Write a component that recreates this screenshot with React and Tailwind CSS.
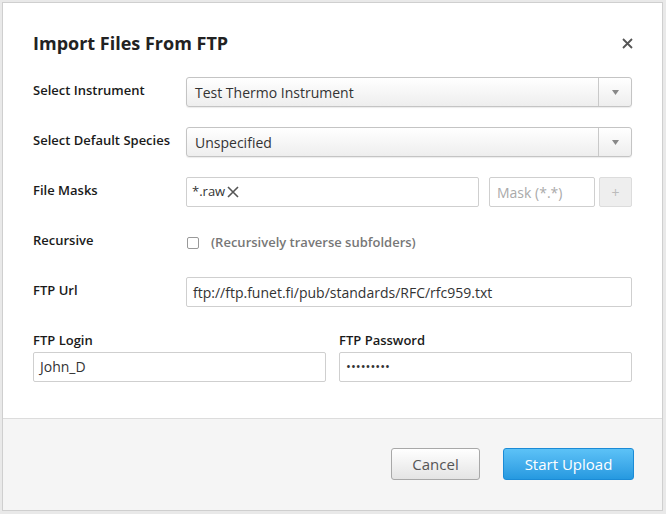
import React from "react";

const font = { fontFamily: '"Open Sans", "Noto Sans", sans-serif' };

function Caret() {
  return (
    <svg width="7" height="5" viewBox="0 0 7 5">
      <path d="M0 0 L7 0 L3.5 5 Z" fill="#888" />
    </svg>
  );
}

function Select({ value }) {
  return (
    <div className="flex h-[30px] flex-1 rounded-[3px] border border-[#c4c4c4] bg-gradient-to-b from-white to-[#eeeeee] shadow-[0_1px_1px_rgba(0,0,0,0.08)]">
      <div className="flex flex-1 items-center pl-[8px] text-[14px] text-[#333]">{value}</div>
      <div className="flex w-[33px] items-center justify-center border-l border-[#c9c9c9]">
        <Caret />
      </div>
    </div>
  );
}

function Label({ children }) {
  return <div className="w-[153px] shrink-0 pt-[4px] text-[13px] font-semibold text-[#1a1a1a]">{children}</div>;
}

export default function App() {
  return (
    <div className="h-[514px] w-[666px] bg-[#e9e9e9] pl-[2px] pt-[2px]" style={font}>
      <div className="flex h-[509px] w-[661px] flex-col border border-[#cfcfcf] bg-white">
        <div className="flex-1 px-[30px]">
          <div className="flex items-center justify-between pt-[27px]">
            <div className="text-[18px] font-bold text-[#222]">Import Files From FTP</div>
            <svg width="11" height="11" viewBox="0 0 11 11" className="mr-[-1px]">
              <path d="M1 1 L10 10 M10 1 L1 10" stroke="#555" strokeWidth="1.8" />
            </svg>
          </div>

          <div className="mt-[20px] flex flex-col gap-[20px]">
            <div className="flex">
              <Label>Select Instrument</Label>
              <Select value="Test Thermo Instrument" />
            </div>
            <div className="flex">
              <Label>Select Default Species</Label>
              <Select value="Unspecified" />
            </div>
            <div className="flex">
              <Label>File Masks</Label>
              <div className="flex flex-1 gap-[10px]">
                <div className="flex h-[30px] flex-1 items-center rounded-[2px] border border-[#cfcfcf] pl-[5px] text-[13px] text-[#333]">
                  <span>*.raw</span>
                  <svg width="12" height="12" viewBox="0 0 12 12" className="ml-[2px]">
                    <path d="M1 1 L11 11 M11 1 L1 11" stroke="#555" strokeWidth="1.6" />
                  </svg>
                </div>
                <div className="flex gap-[4px]">
                  <div className="flex h-[30px] w-[106px] items-center rounded-[2px] border border-[#cfcfcf] pl-[7px] text-[14px] text-[#aaa]">
                    Mask (*.*)
                  </div>
                  <div className="flex h-[30px] w-[33px] items-center justify-center rounded-[2px] border border-[#dcdcdc] bg-[#eeeeee] text-[14px] text-[#bbb]">
                    +
                  </div>
                </div>
              </div>
            </div>
            <div className="flex h-[30px]">
              <Label>Recursive</Label>
              <div className="flex items-center pl-[1px] pt-[1px]">
                <div className="h-[12px] w-[12px] rounded-[2px] border border-[#999] bg-white"></div>
                <span className="ml-[12px] text-[13px] font-semibold text-[#777]">(Recursively traverse subfolders)</span>
              </div>
            </div>
            <div className="flex">
              <Label>FTP Url</Label>
              <div className="flex h-[30px] flex-1 items-center rounded-[2px] border border-[#cfcfcf] pl-[6px] text-[14px] text-[#333]">
                ftp://ftp.funet.fi/pub/standards/RFC/rfc959.txt
              </div>
            </div>
          </div>

          <div className="mt-[24px] flex gap-[13px]">
            <div className="flex flex-1 flex-col">
              <div className="text-[13px] font-semibold text-[#1a1a1a]">FTP Login</div>
              <div className="mt-[1px] flex h-[30px] items-center rounded-[2px] border border-[#cfcfcf] pl-[6px] text-[14px] text-[#333]">
                John_D
              </div>
            </div>
            <div className="flex flex-1 flex-col">
              <div className="text-[13px] font-semibold text-[#1a1a1a]">FTP Password</div>
              <div className="mt-[1px] flex h-[30px] items-center rounded-[2px] border border-[#cfcfcf] pl-[6px] text-[13px] tracking-[0px] text-[#333]">
                •••••••••
              </div>
            </div>
          </div>
        </div>

        <div className="flex h-[92px] items-start justify-end gap-[23px] border-t border-[#dcdcdc] bg-[#f5f5f5] pr-[28px] pt-[29px]">
          <button className="flex h-[32px] w-[89px] items-center justify-center rounded-[3px] border border-[#a8a8a8] bg-gradient-to-b from-white to-[#e4e4e4] text-[15px] text-[#555]">
            Cancel
          </button>
          <button className="flex h-[32px] w-[131px] items-center justify-center rounded-[3px] border border-[#1b8bd6] bg-gradient-to-b from-[#5cc2f7] to-[#2599e0] text-[15px] text-white">
            Start Upload
          </button>
        </div>
      </div>
    </div>
  );
}
